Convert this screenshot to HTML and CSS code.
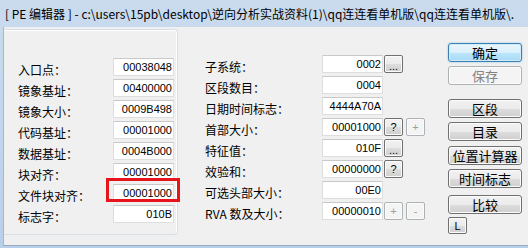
FILE: index.html
```html
<!DOCTYPE html>
<html lang="zh-CN">
<head>
  <meta charset="UTF-8" />
  <title>PE 编辑器</title>
  <link rel="stylesheet" href="styles.css">
</head>
<body>
  <div class="window">
    <div class="titlebar">[ PE 编辑器 ] - c:\users\15pb\desktop\逆向分析实战资料(1)\qq连连看单机版\qq连连看单机版\.</div>

    <div class="client">
      <div class="group">
        <div class="row"><span class="label">入口点：</span><span class="field">00038048</span></div>
        <div class="row"><span class="label">镜象基址：</span><span class="field">00400000</span></div>
        <div class="row"><span class="label">镜象大小：</span><span class="field">0009B498</span></div>
        <div class="row"><span class="label">代码基址：</span><span class="field">00001000</span></div>
        <div class="row"><span class="label">数据基址：</span><span class="field">0004B000</span></div>
        <div class="row"><span class="label">块对齐：</span><span class="field">00001000</span></div>
        <div class="row"><span class="label">文件块对齐：</span><span class="field marked">00001000</span></div>
        <div class="row"><span class="label">标志字：</span><span class="field">010B</span></div>
      </div>

      <div class="middle">
        <div class="row"><span class="label">子系统：</span><span class="field">0002</span><button class="mini dots">...</button></div>
        <div class="row"><span class="label">区段数目：</span><span class="field">0004</span></div>
        <div class="row"><span class="label">日期时间标志：</span><span class="field">4444A70A</span></div>
        <div class="row"><span class="label">首部大小：</span><span class="field">00001000</span><button class="mini">?</button><button class="mini" disabled>+</button></div>
        <div class="row"><span class="label">特征值：</span><span class="field">010F</span><button class="mini dots">...</button></div>
        <div class="row"><span class="label">效验和：</span><span class="field">00000000</span><button class="mini">?</button></div>
        <div class="row"><span class="label">可选头部大小：</span><span class="field">00E0</span></div>
        <div class="row"><span class="label">RVA 数及大小：</span><span class="field">00000010</span><button class="mini" disabled>+</button><button class="mini" disabled>-</button></div>
      </div>

      <div class="actions">
        <button class="btn default">确定</button>
        <button class="btn save" disabled>保存</button>
        <button class="btn sections">区段</button>
        <button class="btn">目录</button>
        <button class="btn calc">位置计算器</button>
        <button class="btn">时间标志</button>
        <button class="btn compare">比较</button>
        <button class="mini small-l">L</button>
      </div>
    </div>
  </div>
</body>
</html>
```

FILE: styles.css
```css
body {
  margin: 0;
  width: 528px;
  height: 248px;
  overflow: hidden;
  font-family: "Noto Sans CJK SC", sans-serif;
  color: #000;
}

.window {
  height: 248px;
  background: linear-gradient(#cadbee, #b9d0ea);
}

.titlebar {
  height: 27px;
  line-height: 28px;
  padding-left: 5px;
  font-size: 12px;
  white-space: nowrap;
  overflow: hidden;
}

.client {
  margin-left: 3px;
  height: 218px;
  background-color: #f0f0f0;
  border-left: 1px solid #aab6c4;
  border-bottom: 1px solid #97aac2;
  display: flex;
  align-items: flex-start;
}

/* left group box */
.group {
  margin-top: 2px;
  width: 159px;
  padding: 28px 0 11px 14px;
  border: 1px solid #d5dfe5;
  border-left: none;
  border-radius: 0 3px 3px 0;
  box-shadow: inset -1px 1px 0 #fff;
  display: flex;
  flex-direction: column;
  gap: 3px;
}

.group .label {
  width: 95px;
}

.middle {
  margin-left: 27px;
  padding-top: 28px;
  width: 243px;
  display: flex;
  flex-direction: column;
  gap: 3px;
}

.middle .label {
  width: 117px;
}

.row {
  display: flex;
  align-items: flex-end;
  height: 18px;
}

.label {
  font-size: 12px;
  line-height: 12px;
  white-space: nowrap;
}

.field {
  position: relative;
  box-sizing: border-box;
  width: 61px;
  height: 18px;
  padding-right: 1px;
  background-color: white;
  border: 1px solid #dedede;
  border-top-color: #c9c9c9;
  font-family: "Liberation Sans", sans-serif;
  font-size: 11px;
  line-height: 16px;
  text-align: right;
}

.field.marked::after {
  content: "";
  position: absolute;
  left: -8px;
  top: -7px;
  width: 68px;
  height: 18px;
  border: 3px solid #e8141c;
}

.mini {
  box-sizing: border-box;
  width: 19px;
  height: 18px;
  margin-left: 1px;
  padding: 0;
  border: 1px solid #707070;
  border-radius: 2px;
  background: linear-gradient(#f2f2f2 0%, #ebebeb 50%, #dddddd 51%, #cfcfcf 100%);
  box-shadow: inset 0 0 0 1px #fbfbfb;
  font-family: "Liberation Sans", sans-serif;
  font-size: 11px;
  line-height: 14px;
  color: #000;
}

.mini + .mini {
  margin-left: 3px;
}

.mini.dots {
  line-height: 20px;
}

.mini:disabled {
  border-color: #adb2b5;
  background: #f4f4f4;
  color: #a0a0a0;
}

.actions {
  width: 74px;
  padding-top: 16px;
  display: flex;
  flex-direction: column;
  gap: 4px;
}

.btn {
  box-sizing: border-box;
  width: 74px;
  height: 19px;
  padding: 0;
  border: 1px solid #707070;
  border-radius: 3px;
  background: linear-gradient(#f2f2f2 0%, #ebebeb 50%, #dddddd 51%, #cfcfcf 100%);
  box-shadow: inset 0 0 0 1px #fcfcfc;
  font-family: "Noto Sans CJK SC", sans-serif;
  font-size: 13px;
  line-height: 16px;
  color: #000;
}

.btn.default {
  border-color: #3c7fb1;
  background: linear-gradient(#eaf6fd 0%, #d9f0fc 50%, #bee6fd 51%, #a7d9f5 100%);
  box-shadow: inset 0 0 0 1px #d0ecfb, 0 0 2px #7cc3ee;
}

.btn:disabled {
  border-color: #adb2b5;
  background: #f4f4f4;
  color: #838383;
}

.btn.sections {
  margin-top: 10px;
}

.btn.calc {
  margin-top: 1px;
}

.btn.compare {
  margin-top: 3px;
}

.small-l {
  margin: -1px 0 0 0;
  height: 17px;
}
```
